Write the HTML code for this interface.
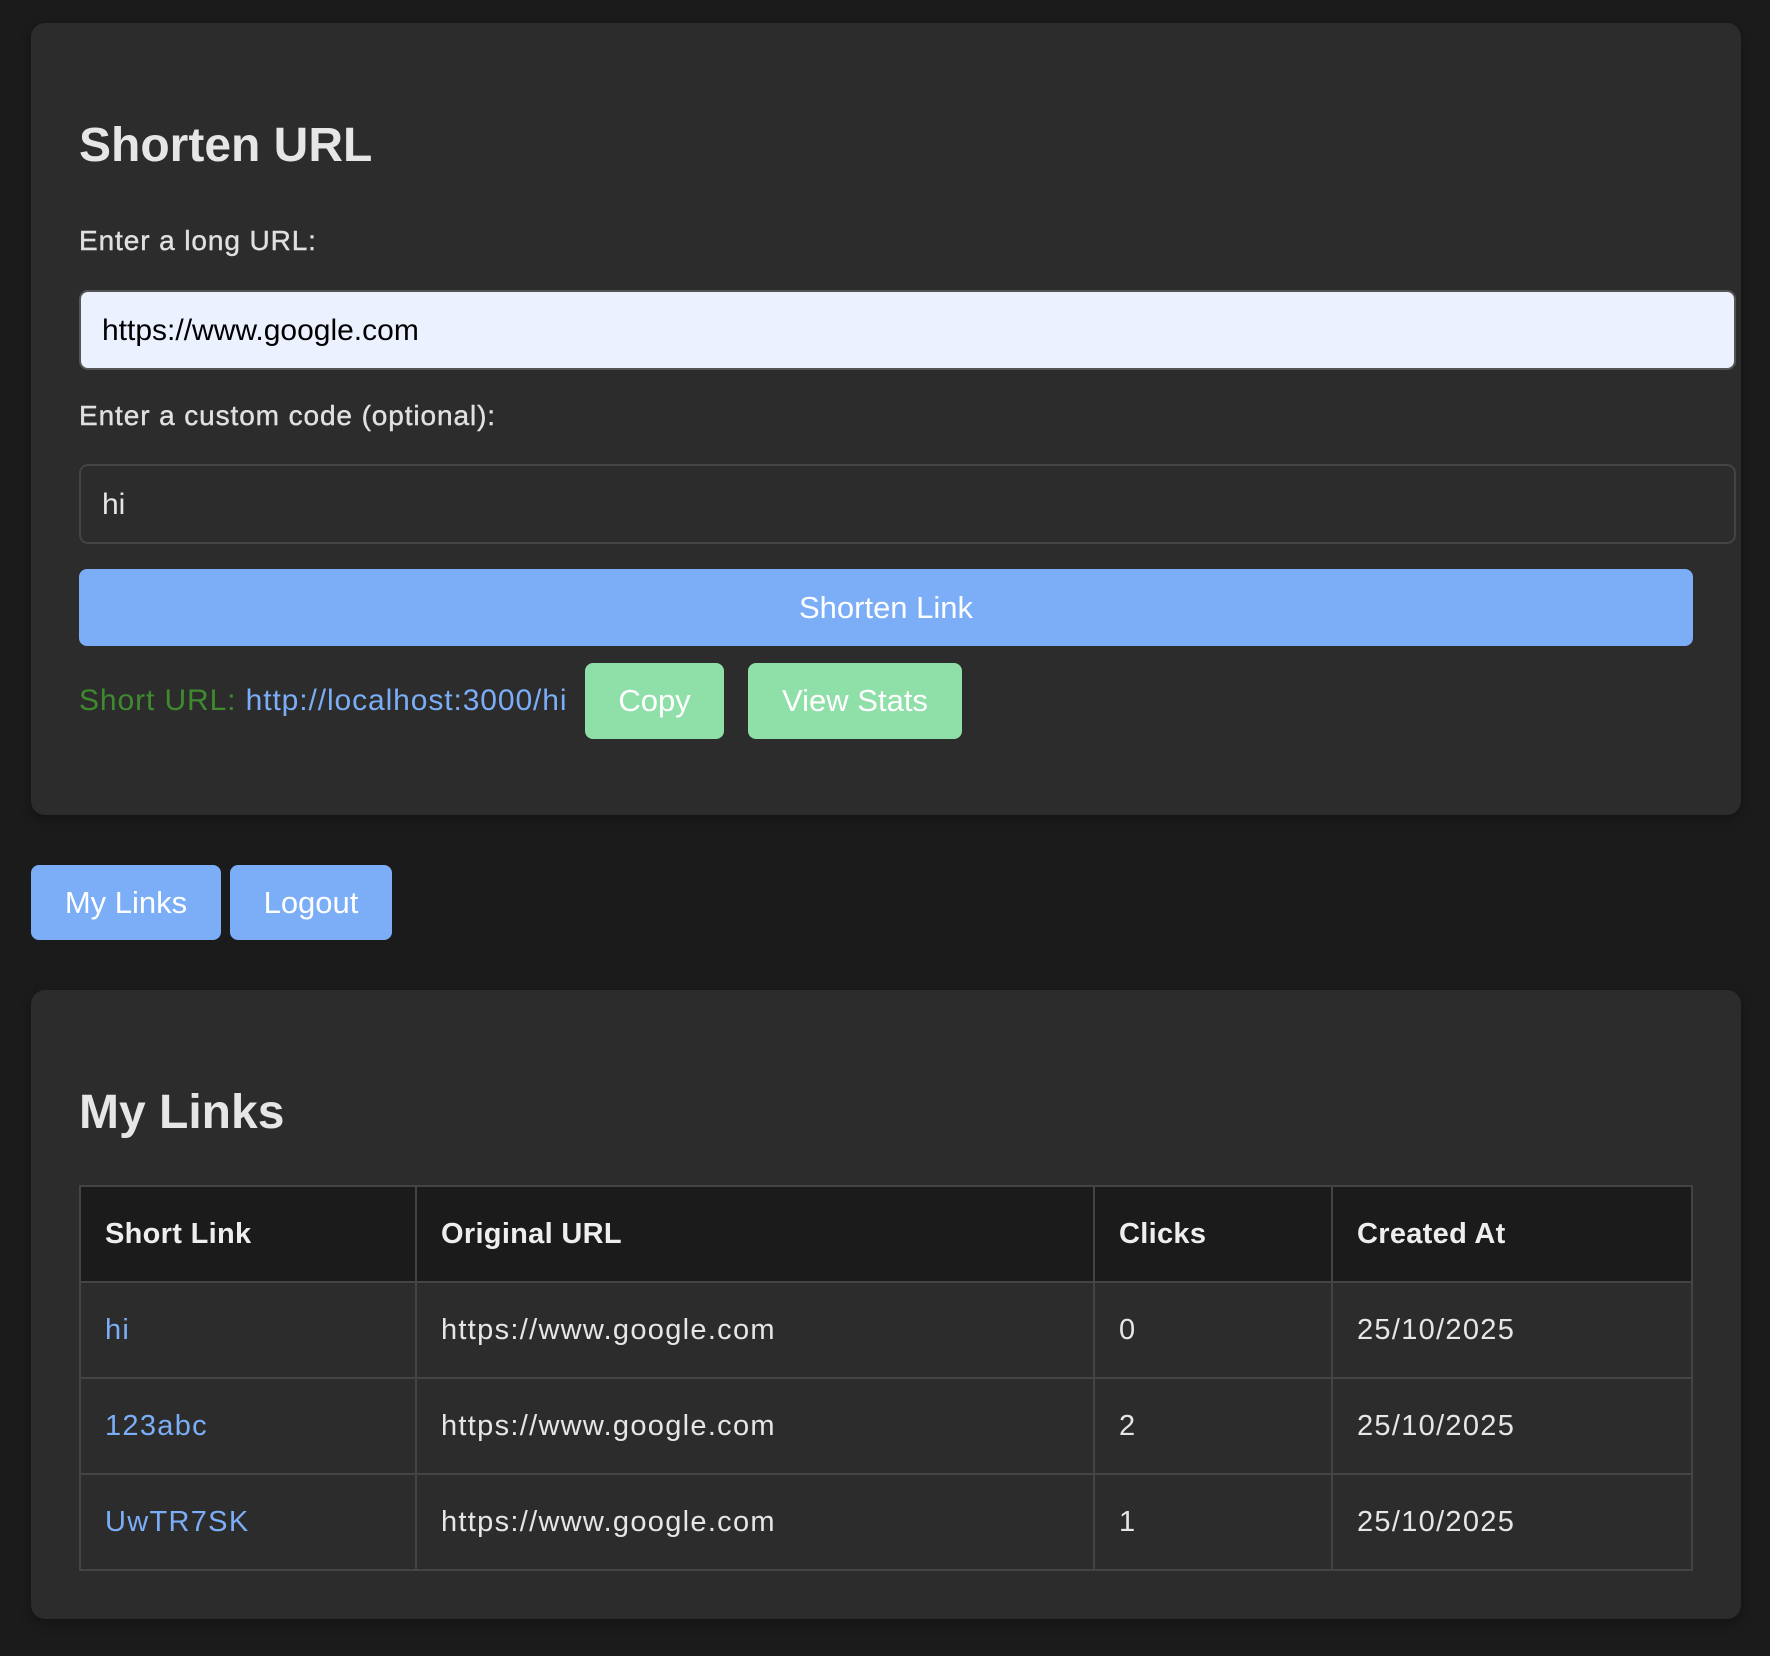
<!DOCTYPE html>
<html><head><meta charset="utf-8"><style>
*{box-sizing:border-box;margin:0;padding:0}
body{width:1770px;height:1656px;background:#1b1b1b;font-family:"Liberation Sans",sans-serif;color:#e6e6e6;position:relative;overflow:hidden}
.card{position:absolute;left:31px;width:1710px;background:#2c2c2c;border-radius:14px;box-shadow:0 4px 12px rgba(0,0,0,.3)}
.abs{position:absolute}
h2{position:absolute;left:79px;font-size:48px;font-weight:bold;color:#e6e6e6}
.lbl{position:absolute;left:79px;font-size:28px;color:#e0e0e0;letter-spacing:0.9px;-webkit-text-stroke:0.4px #e0e0e0}
.inp{position:absolute;left:79px;width:1657px;height:80px;border-radius:9px;font-size:30px;padding-left:21px;line-height:78px}
.btn{position:absolute;border-radius:8px;color:#fff;font-size:31px;text-align:center}
table{position:absolute;left:79px;top:1185px;width:1614px;border-collapse:collapse;font-size:29px;letter-spacing:1.3px}
td,th{border:2px solid #444;height:96px;padding-left:24px;text-align:left}
th{background:#1b1b1b;font-weight:bold;color:#eee;letter-spacing:0.3px}
a{color:#7baef7;text-decoration:none}
</style></head><body>
<div class="card" style="top:23px;height:792px"></div>
<h2 style="top:118px">Shorten URL</h2>
<div class="lbl" style="top:225px">Enter a long URL:</div>
<div class="inp" style="top:290px;background:#ebf1fe;border:2px solid #555;color:#000">https://www.google.com</div>
<div class="lbl" style="top:400px">Enter a custom code (optional):</div>
<div class="inp" style="top:464px;background:#2c2c2c;border:2px solid #444;color:#e6e6e6">hi</div>
<div class="btn" style="left:79px;top:569px;width:1614px;height:77px;line-height:77px;background:#7baef7">Shorten Link</div>
<div class="abs" style="left:79px;top:684px;font-size:30px;color:#3f8a2e;letter-spacing:0.9px">Short URL: <a>http://localhost:3000/hi</a></div>
<div class="btn" style="left:585px;top:663px;width:139px;height:76px;line-height:76px;background:#8fdfa8">Copy</div>
<div class="btn" style="left:748px;top:663px;width:214px;height:76px;line-height:76px;background:#8fdfa8">View Stats</div>
<div class="btn" style="left:31px;top:865px;width:190px;height:75px;line-height:75px;background:#7baef7">My Links</div>
<div class="btn" style="left:230px;top:865px;width:162px;height:75px;line-height:75px;background:#7baef7">Logout</div>
<div class="card" style="top:990px;height:629px"></div>
<h2 style="top:1085px">My Links</h2>
<table>
<tr><th style="width:336px">Short Link</th><th style="width:678px">Original URL</th><th style="width:238px">Clicks</th><th>Created At</th></tr>
<tr><td><a>hi</a></td><td>https://www.google.com</td><td>0</td><td>25/10/2025</td></tr>
<tr><td><a>123abc</a></td><td>https://www.google.com</td><td>2</td><td>25/10/2025</td></tr>
<tr><td><a>UwTR7SK</a></td><td>https://www.google.com</td><td>1</td><td>25/10/2025</td></tr>
</table>
</body></html>
